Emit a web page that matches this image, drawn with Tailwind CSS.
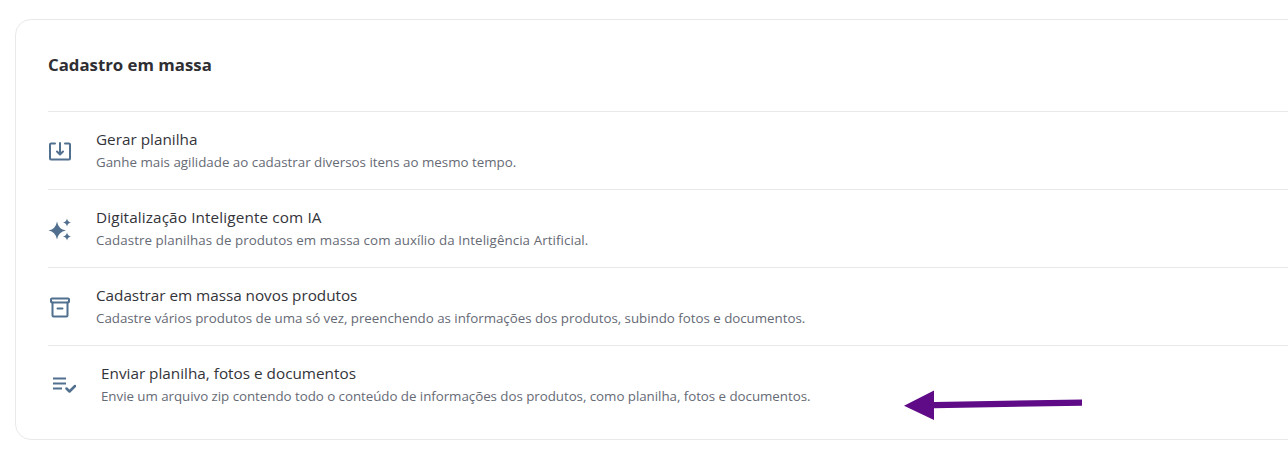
<!DOCTYPE html>
<html lang="pt-BR">
<head>
  <meta charset="UTF-8" />
  <title>Cadastro em massa</title>
  <script src="https://cdn.jsdelivr.net/npm/@tailwindcss/browser@4"></script>
</head>
<body class="bg-white h-[459px] overflow-hidden font-['Open_Sans',sans-serif]">
  <div class="relative pt-[19px] pl-[15px] w-[1288px] overflow-hidden">
    <div class="w-[1400px] h-[421px] border border-[#e9e9e9] rounded-2xl pl-8 bg-white">
      <h2 class="h-[91px] pt-[34px] text-[16.8px] leading-[22px] font-bold text-[#2e2e33]">Cadastro em massa</h2>

      <div class="border-t border-[#e9e9e9] h-[78px] flex items-center">
        <div class="w-12 shrink-0">
          <svg class="w-6 h-6" viewBox="0 0 24 24" fill="none" stroke="#51708f" stroke-width="2" stroke-linecap="round" stroke-linejoin="round">
            <path d="M7 4.500H3a1 1 0 0 0-1 1v14a1 1 0 0 0 1 1h18a1 1 0 0 0 1-1v-14a1 1 0 0 0-1-1H17" />
            <path d="M12 4v11M9 12.500l3 3 3-3" />
          </svg>
        </div>
        <div class="pb-px">
          <div class="text-[15.3px] leading-5 text-[#33343a]">Gerar planilha</div>
          <div class="text-[13.35px] leading-[18px] mt-1 text-[#666a75]">Ganhe mais agilidade ao cadastrar diversos itens ao mesmo tempo.</div>
        </div>
      </div>

      <div class="border-t border-[#e9e9e9] h-[78px] flex items-center">
        <div class="w-12 shrink-0">
          <svg class="w-6 h-6" viewBox="0 0 24 24" fill="#51708f">
            <path d="M9 4.500Q10.300 12.200 18 13.500 10.300 14.800 9 22.500 7.700 14.800 0.500 13.500 7.700 12.200 9 4.500z" />
            <path d="M19 1.500Q19.600 4.900 23 5.500 19.600 6.100 19 9.500 18.400 6.100 15 5.500 18.400 4.900 19 1.500z" />
            <path d="M19 15.500Q19.600 18.900 23 19.500 19.600 20.100 19 23.500 18.400 20.100 15 19.500 18.400 18.900 19 15.500z" />
          </svg>
        </div>
        <div class="pb-px">
          <div class="text-[15.3px] leading-5 tracking-[0.12px] text-[#33343a]">Digitalização Inteligente com IA</div>
          <div class="text-[13.35px] leading-[18px] mt-1 tracking-[0.075px] text-[#666a75]">Cadastre planilhas de produtos em massa com auxílio da Inteligência Artificial.</div>
        </div>
      </div>

      <div class="border-t border-[#e9e9e9] h-[78px] flex items-center">
        <div class="w-12 shrink-0">
          <svg class="w-6 h-6" viewBox="0 0 24 24" fill="none" stroke="#51708f" stroke-width="2" stroke-linecap="round" stroke-linejoin="round">
            <rect x="3" y="3.500" width="18" height="4" rx="1" />
            <path d="M4.500 7.500v13a1 1 0 0 0 1 1h13a1 1 0 0 0 1-1v-13M9.500 13.500h5" />
          </svg>
        </div>
        <div class="pb-px">
          <div class="text-[15.3px] leading-5 tracking-[-0.03px] text-[#33343a]">Cadastrar em massa novos produtos</div>
          <div class="text-[13.35px] leading-[18px] mt-1 tracking-[-0.03px] text-[#666a75]">Cadastre vários produtos de uma só vez, preenchendo as informações dos produtos, subindo fotos e documentos.</div>
        </div>
      </div>

      <div class="border-t border-[#e9e9e9] h-[78px] flex items-center">
        <div class="w-[53px] shrink-0 pl-[4px]">
          <svg class="w-6 h-6" viewBox="0 0 24 24" fill="none" stroke="#51708f" stroke-width="2.200">
            <path d="M1 5.500h13M1 10.500h13M1 15.500h9" />
            <path d="M14.500 15.500l3 3 5.500-5.500" stroke-width="2.500" stroke-linecap="round" stroke-linejoin="round" />
          </svg>
        </div>
        <div class="pb-px">
          <div class="text-[15.3px] leading-5 text-[#33343a]">Enviar planilha, fotos e documentos</div>
          <div class="text-[13.35px] leading-[18px] mt-1 tracking-[-0.045px] text-[#666a75]">Envie um arquivo zip contendo todo o conteúdo de informações dos produtos, como planilha, fotos e documentos.</div>
        </div>
      </div>
    </div>

    <!-- seta de destaque -->
    <svg class="absolute left-[900px] top-[385px]" width="190" height="40" viewBox="900 385 190 40" fill="#5f0a87">
      <path d="M1082 399.500L934 402V390.500L904 405.700 934 420V408.300L1082 405.700z" />
    </svg>
  </div>
</body>
</html>
